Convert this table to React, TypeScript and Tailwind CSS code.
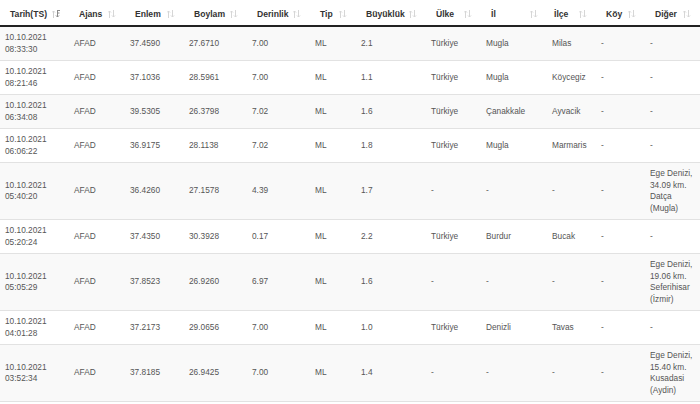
import React from "react";

type Row = {
  d: string;
  t: string;
  lat: string;
  lon: string;
  dep: string;
  mag: string;
  ulke: string;
  il: string;
  ilce: string;
  diger: string[];
};

const rows: Row[] = [
  { d: "10.10.2021", t: "08:33:30", lat: "37.4590", lon: "27.6710", dep: "7.00", mag: "2.1", ulke: "Türkiye", il: "Mugla", ilce: "Milas", diger: ["-"] },
  { d: "10.10.2021", t: "08:21:46", lat: "37.1036", lon: "28.5961", dep: "7.00", mag: "1.1", ulke: "Türkiye", il: "Mugla", ilce: "Köycegiz", diger: ["-"] },
  { d: "10.10.2021", t: "06:34:08", lat: "39.5305", lon: "26.3798", dep: "7.02", mag: "1.6", ulke: "Türkiye", il: "Çanakkale", ilce: "Ayvacik", diger: ["-"] },
  { d: "10.10.2021", t: "06:06:22", lat: "36.9175", lon: "28.1138", dep: "7.02", mag: "1.8", ulke: "Türkiye", il: "Mugla", ilce: "Marmaris", diger: ["-"] },
  { d: "10.10.2021", t: "05:40:20", lat: "36.4260", lon: "27.1578", dep: "4.39", mag: "1.7", ulke: "-", il: "-", ilce: "-", diger: ["Ege Denizi,", "34.09 km.", "Datça", "(Mugla)"] },
  { d: "10.10.2021", t: "05:20:24", lat: "37.4350", lon: "30.3928", dep: "0.17", mag: "2.2", ulke: "Türkiye", il: "Burdur", ilce: "Bucak", diger: ["-"] },
  { d: "10.10.2021", t: "05:05:29", lat: "37.8523", lon: "26.9260", dep: "6.97", mag: "1.6", ulke: "-", il: "-", ilce: "-", diger: ["Ege Denizi,", "19.06 km.", "Seferihisar", "(İzmir)"] },
  { d: "10.10.2021", t: "04:01:28", lat: "37.2173", lon: "29.0656", dep: "7.00", mag: "1.0", ulke: "Türkiye", il: "Denizli", ilce: "Tavas", diger: ["-"] },
  { d: "10.10.2021", t: "03:52:34", lat: "37.8185", lon: "26.9425", dep: "7.00", mag: "1.4", ulke: "-", il: "-", ilce: "-", diger: ["Ege Denizi,", "15.40 km.", "Kusadasi", "(Aydin)"] },
];

const widths = [69, 56, 59, 63, 63, 46, 70, 55, 66, 49, 49, 55];
const headers = ["Tarih(TS)", "Ajans", "Enlem", "Boylam", "Derinlik", "Tip", "Büyüklük", "Ülke", "İl", "İlçe", "Köy", "Diğer"];

function SortIcon({ active }: { active?: boolean }) {
  return (
    <svg width="8" height="8" viewBox="0 0 8 8" className="shrink-0">
      <g stroke={active ? "#cfcfcf" : "#d6d6d6"} strokeWidth="1" fill="none">
        <path d="M1.5 8V1M0 2.5L1.5 1L3 2.5" />
      </g>
      <g stroke={active ? "#8a8a8a" : "#d6d6d6"} strokeWidth="1" fill="none">
        <path d="M5.5 0V7M4 5.5L5.5 7L7 5.5" />
        {active ? <path d="M5.5 0.5H8M5.5 3H7.5" /> : null}
      </g>
    </svg>
  );
}

export default function App() {
  const cell = "px-[5px] py-[5px] align-middle";
  return (
    <div
      className="w-[700px] h-[404px] bg-white overflow-hidden text-[8.3px] leading-[11.5px] text-[#555]"
      style={{ fontFamily: '"Liberation Sans", Arial, sans-serif' }}
    >
      <table className="w-[700px] table-fixed border-collapse">
        <colgroup>
          {widths.map((w, i) => (
            <col key={i} style={{ width: w }} />
          ))}
        </colgroup>
        <thead>
          <tr className="border-b-2 border-[#222]">
            {headers.map((h, i) => (
              <th key={h} className="p-0 font-bold text-left text-[#333] text-[8.6px] leading-[12px]">
                <div className={`flex items-center h-[25px] pt-[3px] pr-[9px] ${i === 9 ? "pl-[7px]" : "pl-[10px]"}`}>
                  <span className="whitespace-nowrap">{h}</span>
                  <span className="ml-auto flex">
                    <SortIcon active={i === 0} />
                  </span>
                </div>
              </th>
            ))}
          </tr>
        </thead>
        <tbody>
          {rows.map((r, i) => (
            <tr key={i} className={`border-b border-[#e2e2e2] ${i % 2 === 0 ? "bg-[#f9f9f9]" : "bg-white"}`}>
              <td className={cell}>
                <div>{r.d}</div>
                <div>{r.t}</div>
              </td>
              <td className={cell}>AFAD</td>
              <td className={cell}>{r.lat}</td>
              <td className={cell}>{r.lon}</td>
              <td className={cell}>{r.dep}</td>
              <td className={cell}>ML</td>
              <td className={cell}>{r.mag}</td>
              <td className={cell}>{r.ulke}</td>
              <td className={cell}>{r.il}</td>
              <td className={cell}>{r.ilce}</td>
              <td className={cell}>-</td>
              <td className={cell}>
                {r.diger.map((l, j) => (
                  <div key={j} className="whitespace-nowrap">{l}</div>
                ))}
              </td>
            </tr>
          ))}
        </tbody>
      </table>
    </div>
  );
}
